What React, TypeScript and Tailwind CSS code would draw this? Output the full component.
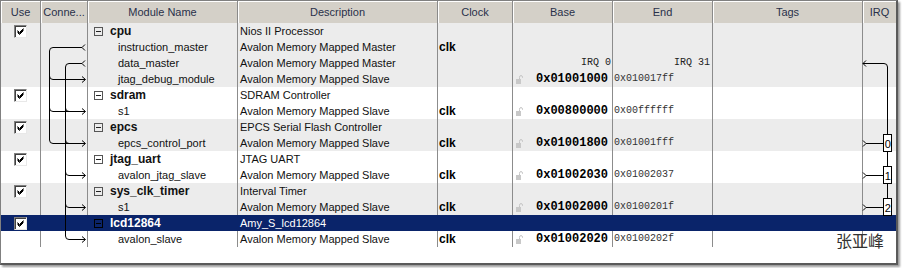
import React from "react";

type Row = {
  kind: "parent" | "child";
  name: string;
  desc: string;
  clock?: string;
  base?: string;
  end?: string;
  irq?: boolean;
  lock?: boolean;
  bg: "gray" | "white" | "sel";
};

const rows: Row[] = [
  { kind: "parent", name: "cpu", desc: "Nios II Processor", bg: "gray" },
  { kind: "child", name: "instruction_master", desc: "Avalon Memory Mapped Master", clock: "clk", bg: "gray" },
  { kind: "child", name: "data_master", desc: "Avalon Memory Mapped Master", base: "IRQ 0", end: "IRQ 31", irq: true, bg: "gray" },
  { kind: "child", name: "jtag_debug_module", desc: "Avalon Memory Mapped Slave", base: "0x01001000", end: "0x010017ff", lock: true, bg: "gray" },
  { kind: "parent", name: "sdram", desc: "SDRAM Controller", bg: "white" },
  { kind: "child", name: "s1", desc: "Avalon Memory Mapped Slave", clock: "clk", base: "0x00800000", end: "0x00ffffff", lock: true, bg: "white" },
  { kind: "parent", name: "epcs", desc: "EPCS Serial Flash Controller", bg: "gray" },
  { kind: "child", name: "epcs_control_port", desc: "Avalon Memory Mapped Slave", clock: "clk", base: "0x01001800", end: "0x01001fff", lock: true, bg: "gray" },
  { kind: "parent", name: "jtag_uart", desc: "JTAG UART", bg: "white" },
  { kind: "child", name: "avalon_jtag_slave", desc: "Avalon Memory Mapped Slave", clock: "clk", base: "0x01002030", end: "0x01002037", lock: true, bg: "white" },
  { kind: "parent", name: "sys_clk_timer", desc: "Interval Timer", bg: "gray" },
  { kind: "child", name: "s1", desc: "Avalon Memory Mapped Slave", clock: "clk", base: "0x01002000", end: "0x0100201f", lock: true, bg: "gray" },
  { kind: "parent", name: "lcd12864", desc: "Amy_S_lcd12864", bg: "sel" },
  { kind: "child", name: "avalon_slave", desc: "Avalon Memory Mapped Slave", clock: "clk", base: "0x01002020", end: "0x0100202f", lock: true, bg: "white" },
];

const headers: { label: string; w: string; last?: boolean }[] = [
  { label: "Use", w: "w-[40px]" },
  { label: "Conne...", w: "w-[47px]" },
  { label: "Module Name", w: "w-[150px]" },
  { label: "Description", w: "w-[200px]" },
  { label: "Clock", w: "w-[75px]" },
  { label: "Base", w: "w-[100px]" },
  { label: "End", w: "w-[100px]" },
  { label: "Tags", w: "w-[150px]" },
  { label: "IRQ", w: "w-[33px]", last: true },
];

function Checkbox() {
  return (
    <div className="w-[13px] h-[13px] bg-white border border-t-[#808080] border-l-[#808080] border-r-[#e8e8e8] border-b-[#e8e8e8] shadow-[inset_1px_1px_0_#404040] flex items-center justify-center">
      <svg width="9" height="9" viewBox="0 0 9 9">
        <path d="M1.5 3.5 L3.5 5.5 L7.5 1.5 M1.5 4.5 L3.5 6.5 L7.5 2.5 M1.5 5.5 L3.5 7.5 L7.5 3.5" stroke="#000" strokeWidth="1" fill="none" />
      </svg>
    </div>
  );
}

function Lock() {
  return (
    <svg width="7" height="9" viewBox="0 0 7 9" className="shrink-0">
      <path d="M3.5 4 V2.5 Q3.5 0.5 5 0.5 Q6.5 0.5 6.5 2.5 V3" stroke="#c4c4c4" strokeWidth="1" fill="none" />
      <rect x="0" y="4" width="5" height="5" fill="#c8c8c8" />
    </svg>
  );
}

function Minus({ sel }: { sel: boolean }) {
  return (
    <div className={`w-[9px] h-[9px] border ${sel ? "border-[#000]" : "border-[#555]"} flex items-center justify-center shrink-0`}>
      <div className={`w-[5px] h-px ${sel ? "bg-[#000]" : "bg-[#222]"}`} />
    </div>
  );
}

export default function App() {
  return (
    <div className="relative w-[902px] h-[268px] bg-white" style={{ fontFamily: '"Liberation Sans", Arial, sans-serif' }}>
      <div className="w-[898px] h-[265px] border-l border-t border-r-2 border-b-2 border-l-[#808080] border-t-[#808080] border-r-[#5a5a5a] border-b-[#5a5a5a] shadow-[2px_2px_2px_rgba(0,0,0,0.4)] bg-white flex flex-col">
        {/* header */}
        <div className="flex h-[22px] bg-[#d4d0c8]">
          {headers.map((h) => (
            <div
              key={h.label}
              className={`${h.w} h-full flex items-center justify-center text-[11px] text-[#29304a] shadow-[inset_1px_1px_0_#ffffff] ${h.last ? "" : "border-r border-[#8a8a8a]"}`}
            >
              {h.label}
            </div>
          ))}
        </div>
        {/* body */}
        <div className="flex flex-col">
          {rows.map((r, i) => {
            const sel = r.bg === "sel";
            const bg = sel ? "bg-[#0a246a]" : r.bg === "gray" ? "bg-[#ececec]" : "bg-white";
            const line = sel ? "border-r border-[#0a246a]" : "border-r border-[#8c8c8c]";
            const txt = sel ? "text-white" : "text-[#111]";
            return (
              <div key={i} className={`flex h-4 ${bg} text-[11px] leading-4`}>
                <div className={`w-[40px] h-full ${line} flex items-center justify-center`}>
                  {r.kind === "parent" && <Checkbox />}
                </div>
                <div className={`w-[47px] h-full ${line}`} />
                <div className={`w-[150px] h-full ${line} flex items-center ${txt}`}>
                  {r.kind === "parent" ? (
                    <div className="flex items-center pl-[6px] gap-[7px]">
                      <Minus sel={sel} />
                      <span className="font-bold text-[12px]">{r.name}</span>
                    </div>
                  ) : (
                    <span className="pl-[30px]">{r.name}</span>
                  )}
                </div>
                <div className={`w-[200px] h-full ${line} pl-[2px] ${txt}`}>{r.desc}</div>
                <div className={`w-[75px] h-full ${line} pl-px font-bold text-[12px] text-black`}>{r.clock ?? ""}</div>
                <div className={`w-[100px] h-full ${line} flex items-center`} style={{ fontFamily: '"Liberation Mono", "Courier New", monospace' }}>
                  {r.irq ? (
                    <span className="ml-auto pr-px text-[10px] text-[#222]">{r.base}</span>
                  ) : r.base ? (
                    <>
                      <span className="pl-[3px]">{r.lock && <Lock />}</span>
                      <span className="ml-auto pr-[4px] font-bold text-[12px] text-black">{r.base}</span>
                    </>
                  ) : null}
                </div>
                <div className={`w-[100px] h-full ${line} flex items-center text-[10px] text-[#333]`} style={{ fontFamily: '"Liberation Mono", "Courier New", monospace' }}>
                  {r.irq ? <span className="ml-auto pr-[2px] text-[#222]">{r.end}</span> : <span className="pl-px">{r.end ?? ""}</span>}
                </div>
                <div className={`w-[150px] h-full ${line}`} />
                <div className="w-[33px] h-full" />
              </div>
            );
          })}
        </div>
      </div>

      {/* connection + irq drawings */}
      <svg className="absolute left-0 top-0 pointer-events-none" width="902" height="268" viewBox="0 0 902 268">
        <g stroke="#000" strokeWidth="1" fill="none">
          {/* instruction master line A */}
          <path d="M82 47.5 H53 Q49.5 47.5 49.5 51 V140 Q49.5 143.5 53 143.5 H85" />
          <path d="M85 44.5 L82 47.5 L85 50.5" />
          <path d="M49.5 76 Q49.5 79.5 53 79.5 H85" />
          <path d="M49.5 108 Q49.5 111.5 53 111.5 H85" />
          {/* data master line B */}
          <path d="M82 63.5 H69 Q65.5 63.5 65.5 67 V236 Q65.5 239.5 69 239.5 H85" />
          <path d="M85 60.5 L82 63.5 L85 66.5" />
          <path d="M65.5 108 Q65.5 111.5 69 111.5" />
          <path d="M65.5 140 Q65.5 143.5 69 143.5" />
          <path d="M65.5 172 Q65.5 175.5 69 175.5 H85" />
          <path d="M65.5 204 Q65.5 207.5 69 207.5 H85" />
          {/* arrowheads */}
          {[79, 111, 143, 175, 207, 239].map((y) => (
            <path key={y} d={`M82 ${y - 2.5} L85.5 ${y + 0.5} L82 ${y + 3.5}`} />
          ))}
          {/* IRQ */}
          <path d="M866 60.5 L863 63.5 L866 66.5" />
          <path d="M863 63.5 H884 Q887.5 63.5 887.5 67 V199" />
          {[143, 175, 207].map((y) => (
            <g key={y}>
              <path d={`M863 ${y - 2.5} L866 ${y + 0.5} L863 ${y + 3.5}`} />
              <path d={`M866 ${y + 0.5} H883.5`} />
            </g>
          ))}
        </g>
        {[
          { y: 143, t: "0" },
          { y: 175, t: "1" },
          { y: 207, t: "2" },
        ].map((b) => (
          <g key={b.t}>
            <rect x="883.5" y={b.y - 8.5} width="8" height="17" fill="#fff" stroke="#000" strokeWidth="1" />
            <text x="887.8" y={b.y + 4.5} fontSize="11" textAnchor="middle" fill="#000" fontFamily="Liberation Sans, Arial, sans-serif">
              {b.t}
            </text>
          </g>
        ))}
      </svg>

      <div
        className="absolute left-[836px] top-[230px] text-[16px] leading-[20px] text-[#333]"
        style={{ fontFamily: '"Noto Sans CJK SC", sans-serif' }}
      >
        张亚峰
      </div>
    </div>
  );
}
